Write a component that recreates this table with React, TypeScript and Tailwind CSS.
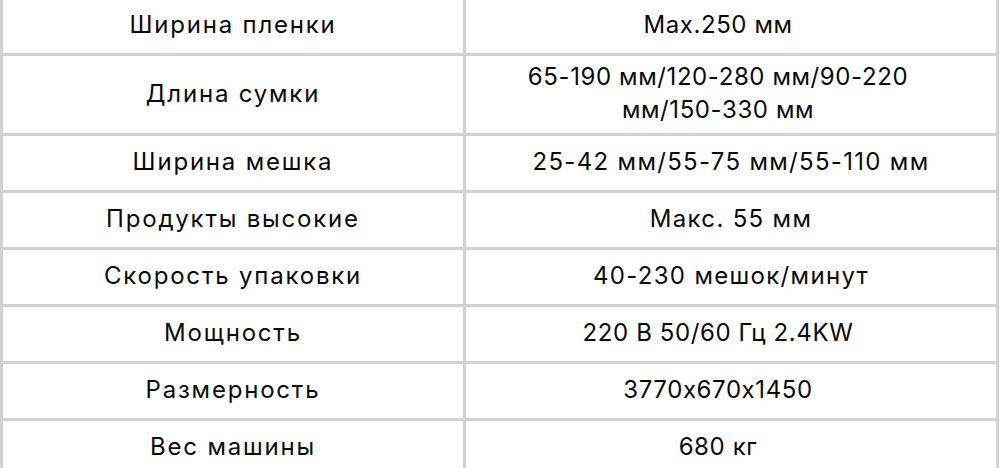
const rows: { k: string; v: string; wide?: boolean }[] = [
  { k: "Ширина пленки", v: "Max.250 мм" },
  { k: "Длина сумки", v: "65-190 мм/120-280 мм/90-220 мм/150-330 мм" },
  { k: "Ширина мешка", v: "25-42 мм/55-75 мм/55-110 мм", wide: true },
  { k: "Продукты высокие", v: "Макс. 55 мм", wide: true },
  { k: "Скорость упаковки", v: "40-230 мешок/минут", wide: true },
  { k: "Мощность", v: "220 В 50/60 Гц 2.4KW" },
  { k: "Размерность", v: "3770x670x1450" },
  { k: "Вес машины", v: "680 кг" },
];

export default function App() {
  return (
    <div className="h-[468px] w-[1000px] overflow-hidden bg-white">
      <div
        className="-mt-px w-[999px] border-x-[3px] border-[#d2d2d2] text-[24px] leading-[33px] text-[#0a0a0a] [font-feature-settings:'calt'_0]"
        style={{ fontFamily: "Inter, 'Noto Sans', sans-serif" }}
      >
        {rows.map((r) => (
          <div key={r.k} className="grid min-h-[57px] grid-cols-[463px_530px] border-b-[3px] border-[#d2d2d2]">
            <div className="flex items-center justify-center border-r-[3px] border-[#d2d2d2] px-4 pt-[4px] pb-[7px] text-center tracking-[0.075em]">
              {r.k}
            </div>
            {r.wide ? (
              <div className="flex items-center justify-center px-[40px] pt-[4px] pb-[7px] text-center tracking-[0.055em]">
                {r.v}
              </div>
            ) : (
              <div className="flex items-center justify-center pl-[50px] pr-[76px] pt-[4px] pb-[7px] text-center tracking-[0.025em]">
                {r.v}
              </div>
            )}
          </div>
        ))}
      </div>
    </div>
  );
}
